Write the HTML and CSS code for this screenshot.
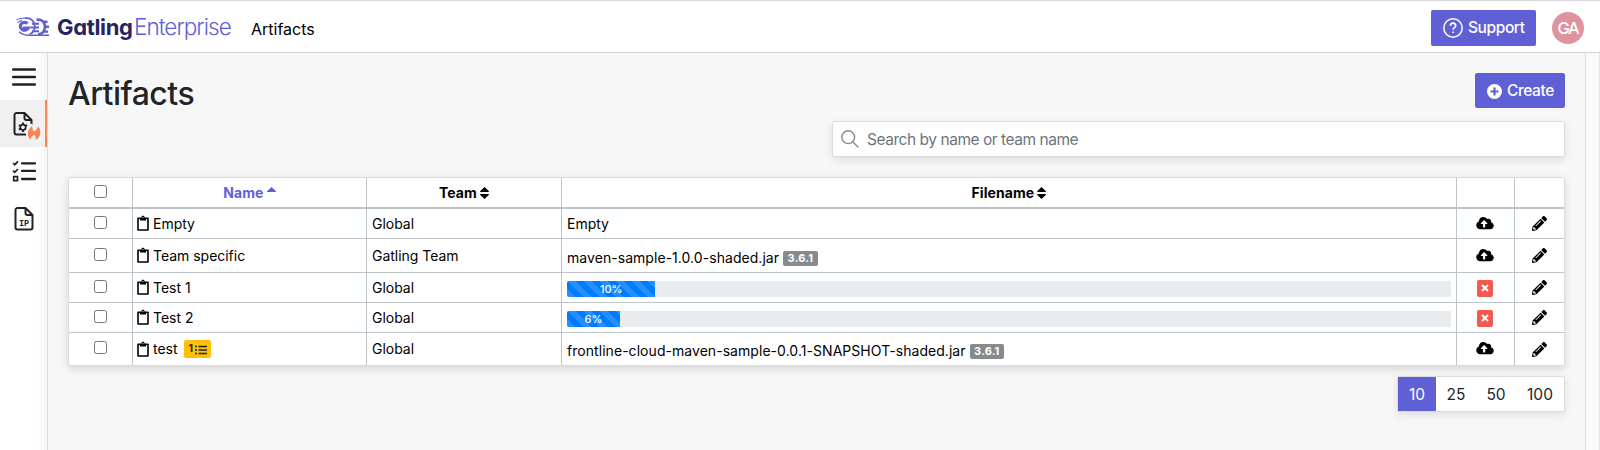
FILE: index.html
```html
<!DOCTYPE html>
<html lang="en">
<head>
<meta charset="utf-8">
<title>Artifacts</title>
<link rel="stylesheet" href="styles.css">
</head>
<body>
<svg width="0" height="0" class="defs">
  <symbol id="clip" viewBox="0 0 12 16"><path d="M1 3.300h10v11.700H1z" fill="none" stroke="currentColor" stroke-width="1.600" stroke-linejoin="round"/><path d="M3 3h1.300a1.700 2.500 0 0 1 3.400 0H9v2.500H3z" fill="currentColor"/><circle cx="6" cy="2.600" r=".6" fill="#fff"/></symbol>
  <symbol id="cloud" viewBox="0 0 640 512"><path fill="currentColor" d="M537.600 226.600c4.100-10.700 6.400-22.400 6.400-34.600 0-53-43-96-96-96-19.700 0-38.100 6-53.300 16.200C367 64.200 315.300 32 256 32c-88.400 0-160 71.600-160 160 0 2.700.1 5.400.2 8.100C40.200 219.800 0 273.200 0 336c0 79.500 64.500 144 144 144h368c70.700 0 128-57.300 128-128 0-61.900-44-113.600-102.400-125.400zM393.400 288H328v112c0 8.800-7.200 16-16 16h-48c-8.800 0-16-7.200-16-16V288h-65.400c-14.300 0-21.400-17.200-11.300-27.300l105.400-105.400c6.200-6.200 16.400-6.200 22.600 0l105.400 105.400c10.100 10.100 2.900 27.300-11.300 27.300z"/></symbol>
  <symbol id="pencil" viewBox="0 0 512 512"><path fill="currentColor" d="M497.900 142.100l-46.100 46.100c-4.700 4.700-12.300 4.700-17 0l-111-111c-4.700-4.700-4.700-12.300 0-17l46.100-46.100c18.700-18.700 49.100-18.700 67.900 0l60.100 60.100c18.800 18.700 18.800 49.100 0 67.900zM284.200 99.800L21.600 362.400.4 483.900c-2.900 16.400 11.400 30.600 27.800 27.800l121.500-21.300 262.600-262.600c4.700-4.700 4.700-12.300 0-17l-111-111c-4.800-4.700-12.400-4.700-17.100 0zM124.100 339.900c-5.500-5.500-5.500-14.300 0-19.800l154-154c5.500-5.500 14.300-5.500 19.800 0s5.500 14.300 0 19.800l-154 154c-5.500 5.500-14.300 5.500-19.800 0zM88 424h48v36.300l-64.500 11.300-31.100-31.100L51.700 376H88v48z"/></symbol>
  <symbol id="sort" viewBox="0 0 9 12"><path fill="currentColor" d="M4.500 0 9 4.300Q9 5 8.300 5H.7Q0 5 0 4.300zM4.500 12 9 7.700Q9 7 8.300 7H.7Q0 7 0 7.700z"/></symbol>
  <symbol id="page" viewBox="0 0 20 24"><path d="M3.500 1h8L18.500 8v12.500a2 2 0 0 1-2 2h-13a2 2 0 0 1-2-2V3a2 2 0 0 1 2-2zM11.500 1v5a2 2 0 0 0 2 2h5" fill="none" stroke="#222" stroke-width="2" stroke-linejoin="round"/></symbol>
</svg>

<header class="topbar">
  <a class="brand">
    <svg class="mark" width="34" height="20" viewBox="0 0 34 20" fill="none" stroke="#6060d6">
      <path d="M.5 3Q4 .8 11 1M1.500 5.500 6 3.200" stroke-width="1.100"/>
      <path d="M11.500 6.500a4.200 3.900 0 1 0 .8 4.500H7" stroke-width="3.200"/>
      <path d="M9 1.200c6-1 9.800 3.200 9.800 8.300 0 3.700-2 6.500-5.300 7.700" stroke-width="1.700"/>
      <path d="M16 6.800h7M14.500 10.500h8.500M16 14.200h7" stroke-width="2.100"/>
      <path d="M20.500 2.600c5.500-.6 8.500 2.700 8.500 7.200s-3 7.400-7 7.500" stroke-width="2.700"/>
      <path d="M28 4.800h3.500M29 9.800h4M28 14.600h4" stroke-width="2.400"/>
      <path d="M3 14.800q3 3 9 3.500h21" stroke-width="1.400"/>
    </svg>
    <span class="gatling">Gatling</span><span class="enterprise">Enterprise</span>
  </a>
  <span class="crumb">Artifacts</span>
  <button class="btn support"><svg width="20" height="20" viewBox="0 0 20 20" fill="none" stroke="#fff"><circle cx="10" cy="10" r="9.200" stroke-width="1.500"/><path d="M7.400 7.800c0-3.600 5.300-3.600 5.300 0 0 1.900-2.600 1.900-2.600 4" stroke-width="1.600"/><path d="M10.100 13.500v1.600" stroke-width="1.700"/></svg><span>Support</span></button>
  <span class="avatar">GA</span>
</header>

<div class="shell">
  <nav class="side">
    <a class="item"><svg width="24" height="18" viewBox="0 0 24 18"><path d="M1.200 1.500h21.600M1.200 9h21.600M1.200 16.500h21.600" stroke="#222" stroke-width="2.500" stroke-linecap="round"/></svg></a>
    <a class="item active"><svg width="20" height="24"><use href="#page"/><g transform="translate(10 15.300)" stroke="#222"><circle r="2.700" fill="none" stroke-width="1.700"/><path d="M0-4.700v2M0 4.700v-2M-4.100-2.300l1.700 1M4.100 2.300l-1.700-1M-4.100 2.300l1.700-1M4.100-2.300l-1.700 1" stroke-width="1.900"/></g></svg>
      <svg class="flame" width="18" height="20" viewBox="0 0 18 20"><circle cx="9" cy="10" r="8" fill="#f6eeea"/><path d="M7.500 1.500C1.500 3 .2 10.500 4 15.500M10.500 18.500c6-1.500 7.300-9 3.500-14" fill="none" stroke="#fff" stroke-width="2.200"/><path d="M4.800 16.500C1.200 11.500 2.500 6.500 7 3l1 4.800 2.200.2L13.500 3.500c3.500 5.500 2 10-2.500 13.500l-1-4.800-2-.2z" fill="#fc8458"/></svg></a>
    <a class="item"><svg width="24" height="22" viewBox="0 0 24 22" fill="none" stroke="#222"><path d="M10 3.300h13M10 10.800h13M10 19h13" stroke-width="2.300" stroke-linecap="round"/><path d="M1 3l1.700 1.700L6 1.300M1 10.700l1.700 1.700L6 9" stroke-width="1.700"/><path d="M1.700 16.700h3.800v4H1.700z" stroke-width="1.700"/></svg></a>
    <a class="item last"><svg width="20" height="24"><use href="#page"/><text x="4.900" y="18.800" class="ip">IP</text></svg></a>
  </nav>
  <main class="content">
    <div class="heading"><h1>Artifacts</h1>
      <button class="btn create"><svg width="15" height="15" viewBox="0 0 15 15"><circle cx="7.500" cy="7.500" r="7.500" fill="#fff"/><path d="M7.500 3.500v8M3.500 7.500h8" stroke="#6060d6" stroke-width="2.200"/></svg><span>Create</span></button></div>
    <label class="search"><svg width="18" height="18" viewBox="0 0 18 18" fill="none" stroke="#868b8f" stroke-width="1.400"><circle cx="7.200" cy="7.200" r="6.400"/><path d="M11.800 11.800 17.400 17.400"/></svg><span>Search by name or team name</span></label>
    <table class="grid">
      <colgroup><col class="c1"><col class="c2"><col class="c3"><col class="c4"><col class="c5"><col class="c6"></colgroup>
      <thead><tr><th><i class="check"></i></th><th class="sorted"><span>Name</span> <svg class="up" width="9" height="5" viewBox="0 0 9 5"><path d="M4.500 0 9 4.300V5H0v-.7z" fill="currentColor"/></svg></th><th><span>Team</span> <svg class="sort" width="9" height="12"><use href="#sort"/></svg></th><th><span>Filename</span> <svg class="sort" width="9" height="12"><use href="#sort"/></svg></th><th></th><th></th></tr></thead>
      <tbody>
        <tr class="r30"><td><i class="check"></i></td><td><div class="name"><svg width="12" height="16"><use href="#clip"/></svg><span>Empty</span></div></td><td>Global</td><td>Empty</td><td><svg class="cloud" width="18" height="14"><use href="#cloud"/></svg></td><td><svg width="15" height="15"><use href="#pencil"/></svg></td></tr>
        <tr class="r34"><td><i class="check"></i></td><td><div class="name"><svg width="12" height="16"><use href="#clip"/></svg><span>Team specific</span></div></td><td>Gatling Team</td><td><div class="file"><span>maven-sample-1.0.0-shaded.jar</span><b class="ver">3.6.1</b></div></td><td><svg class="cloud" width="18" height="14"><use href="#cloud"/></svg></td><td><svg width="15" height="15"><use href="#pencil"/></svg></td></tr>
        <tr class="r30"><td><i class="check"></i></td><td><div class="name"><svg width="12" height="16"><use href="#clip"/></svg><span>Test 1</span></div></td><td>Global</td><td><div class="progress"><div class="bar" style="width:10%">10%</div></div></td><td><span class="cancel"><svg width="8" height="8" viewBox="0 0 8 8"><path d="M1 1l6 6M7 1 1 7" stroke="#fff" stroke-width="2"/></svg></span></td><td><svg width="15" height="15"><use href="#pencil"/></svg></td></tr>
        <tr class="r30"><td><i class="check"></i></td><td><div class="name"><svg width="12" height="16"><use href="#clip"/></svg><span>Test 2</span></div></td><td>Global</td><td><div class="progress"><div class="bar" style="width:6%">6%</div></div></td><td><span class="cancel"><svg width="8" height="8" viewBox="0 0 8 8"><path d="M1 1l6 6M7 1 1 7" stroke="#fff" stroke-width="2"/></svg></span></td><td><svg width="15" height="15"><use href="#pencil"/></svg></td></tr>
        <tr class="r32"><td><i class="check"></i></td><td><div class="name"><svg width="12" height="16"><use href="#clip"/></svg><span>test</span><b class="count">1<svg width="12" height="10" viewBox="0 0 12 10"><path d="M3.500 1.500H12M3.500 5H12M3.500 8.500H12M0 1.500h2M0 5h2M0 8.500h2" stroke="#212529" stroke-width="1.500"/></svg></b></div></td><td>Global</td><td><div class="file"><span>frontline-cloud-maven-sample-0.0.1-SNAPSHOT-shaded.jar</span><b class="ver">3.6.1</b></div></td><td><svg class="cloud" width="18" height="14"><use href="#cloud"/></svg></td><td><svg width="15" height="15"><use href="#pencil"/></svg></td></tr>
      </tbody>
    </table>
    <div class="sizes"><span class="on">10</span><span>25</span><span>50</span><span>100</span></div>
  </main>
  <div class="gutter"></div>
</div>
</body>
</html>
```
FILE: styles.css
```css
* { box-sizing: border-box; }
body { margin: 0; height: 450px; overflow: hidden; background: #f7f7f7; font-family: Inter, "Liberation Sans", sans-serif; color: #000; }
svg { display: block; flex: none; }
.defs { position: absolute; }
.topbar { height: 53px; display: flex; align-items: center; padding: 0 16px; background: #fff; border-top: 1px solid #d9d9df; border-bottom: 1px solid #cfcfd8; }
.brand { display: flex; align-items: center; width: 235px; height: 40px; }
.mark { margin-right: 7px; }
.gatling { width: 77px; font: 700 22px/30px Inter, sans-serif; font-feature-settings: "cv11"; letter-spacing: -.35px; color: #272560; }
.enterprise { font: 300 22.500px/30px Inter, sans-serif; letter-spacing: -.95px; color: #6060d6; white-space: nowrap; }
.crumb { font-size: 16px; letter-spacing: 0; margin-top: 4px; }
.btn { display: flex; align-items: center; border: 0; border-radius: 2px; background: #6060d6; color: #fff; font: 500 15.500px/24px Inter, sans-serif; letter-spacing: -.4px; white-space: nowrap; }
.support { margin-left: auto; width: 105px; height: 36px; padding: 0 0 0 12px; gap: 5px; margin-top: 2px; }
.avatar { width: 32px; height: 32px; margin-left: 16px; margin-top: 2px; border-radius: 50%; background: #df939f; color: #fff; font-size: 16.500px; font-weight: 500; letter-spacing: -1.2px; display: flex; align-items: center; justify-content: center; }
.shell { display: flex; height: 397px; }
.side { width: 48px; background: linear-gradient(90deg, #fff 80%, #f5f5f5); border-right: 1px solid #dcdcdc; }
.item { display: flex; align-items: center; justify-content: center; height: 47px; position: relative; padding-top: 1px; }
.item.last { padding-top: 2px; }
.item.active { background: #f0f0f0; border-right: 2px solid #fc8458; padding-left: 1px; }
.flame { position: absolute; left: 25px; top: 23px; }
.ip { font: 700 8.500px "Liberation Mono", monospace; fill: #222; }
.content { flex: 1; padding: 20px 20px 0; display: flex; flex-direction: column; }
.heading { display: flex; justify-content: space-between; height: 48px; }
h1 { margin: 0; font-size: 32px; line-height: 42px; font-weight: 500; letter-spacing: -.5px; color: #212529; }
.create { width: 90px; height: 35px; padding: 1px 0 0 12px; gap: 5px; }
.search { align-self: flex-end; display: flex; align-items: center; gap: 8px; width: 733px; height: 36px; padding-left: 8px; background: #fff; border: 1px solid #dcdcde; border-radius: 2px; box-shadow: 0 3px 8px rgba(0,0,0,.1); color: #6c757d; font-size: 15.500px; letter-spacing: -.46px; }
.grid { width: 1497px; margin-top: 20px; table-layout: fixed; border-collapse: separate; border-spacing: 0; background: #fff; border: 1px solid #dadcde; border-radius: 2px; box-shadow: 0 3px 8px rgba(0,0,0,.14); font-size: 14px; letter-spacing: -.02px; line-height: 20px; }
.c1 { width: 64px; } .c2 { width: 234px; } .c3 { width: 195px; } .c4 { width: 895px; } .c5 { width: 58px; } .c6 { width: 49px; }
th, td { padding: 0 5px; border-right: 1px solid #bdc4cb; border-bottom: 1px solid #bdc4cb; vertical-align: middle; white-space: nowrap; }
th:last-child, td:last-child { border-right: 0; }
tbody tr:last-child td { border-bottom: 0; }
th { height: 31px; border-bottom-width: 2px; font-weight: 700; }
th svg { display: inline-block; }
th span { letter-spacing: .05px; }
.sort { vertical-align: -1px; }
.up { vertical-align: 6px; }
.sorted { color: #6060d6; }
.r30 td { height: 30px; } .r34 td { height: 34px; } .r32 td { height: 32px; }
.check { display: block; width: 13px; height: 13px; margin: -3px auto 0; border: 1px solid #767676; border-radius: 2.500px; background: #fff; }
.name, .file { display: flex; align-items: center; }
.name > svg { margin: -1px 4px 0 -1px; }
.file { padding-top: 4px; letter-spacing: .05px; }
.ver { height: 15px; margin: 1px 0 0 4px; padding: 0 4.500px; border-radius: 2px; background: #868b8f; color: #fff; font-size: 11px; letter-spacing: .2px; line-height: 15px; }
.count { display: flex; align-items: center; height: 18px; margin-left: 6px; padding: 0 4px 0 5px; gap: 2px; border-radius: 2px; background: #ffc107; color: #212529; font-size: 10.500px; }
.count svg { margin-top: 2px; }
td:nth-child(5) { padding-right: 7px; }
td:nth-child(5) svg, td:nth-child(6) > svg { margin: 0 auto; }
td .cloud { position: relative; top: -1px; }
.progress { height: 16px; margin-top: 3px; background: #e9ecef; border-radius: 2px; overflow: hidden; }
.bar { height: 16px; color: #fff; font-size: 11px; font-weight: 500; line-height: 16px; text-align: center; background: linear-gradient(45deg, rgba(255,255,255,.15) 25%, transparent 25%, transparent 50%, rgba(255,255,255,.15) 50%, rgba(255,255,255,.15) 75%, transparent 75%) 0 0 / 16px 16px #007bff; }
.cancel { display: flex; align-items: center; width: 16px; height: 17px; margin: 1px auto 0; background: #f2594f; border-radius: 2px; }
.sizes { align-self: flex-end; display: flex; height: 36px; margin-top: 10px; background: #fff; border: 1px solid #dadcde; border-radius: 2px; box-shadow: 0 3px 8px rgba(0,0,0,.1); color: #212529; font-size: 15.500px; line-height: 35px; }
.sizes span { width: 40px; text-align: center; }
.sizes .on { width: 38px; background: #6060d6; color: #fff; }
.sizes span:last-child { width: 48px; }
.gutter { width: 15px; background: #fafafa; border-left: 1px solid #dedede; border-right: 1px solid #e4e4e4; }
```
